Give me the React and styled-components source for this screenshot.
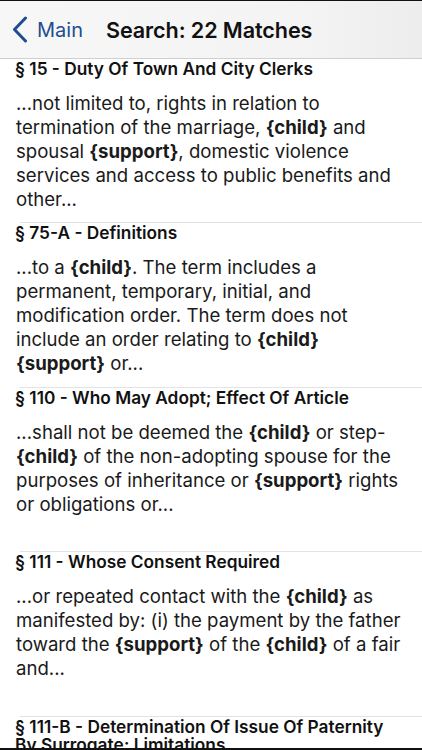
import React from "react";
import styled, { createGlobalStyle } from "styled-components";

const Global = createGlobalStyle`
  html, body { margin: 0; padding: 0; background: #fff; }
  body { font-family: Inter, "Liberation Sans", sans-serif; -webkit-font-smoothing: antialiased; }
`;

const Frame = styled.div`
  width: 422px;
  height: 750px;
  box-sizing: border-box;
  border-top: 1px solid #111;
  border-bottom: 2px solid #111;
  display: flex;
  flex-direction: column;
  overflow: hidden;
  background: #fff;
`;

const NavBar = styled.header`
  flex: 0 0 auto;
  height: 57px;
  border-bottom: 1px solid #cfcfd1;
  background: linear-gradient(to right, #f7f7f7, #f4f4f4 70%, #ededed);
  display: flex;
  align-items: center;
  padding-left: 12px;
`;

const BackButton = styled.button`
  display: flex;
  align-items: center;
  gap: 9px;
  border: 0;
  background: none;
  padding: 0;
  color: #1d4e8f;
  font-family: inherit;
  font-size: 20px;
  font-weight: 400;
  cursor: pointer;
`;

const NavTitle = styled.h1`
  margin: 0 0 0 23px;
  font-size: 21.6px;
  font-weight: 600;
  color: #111;
  letter-spacing: -0.1px;
`;

const List = styled.main`
  flex: 1 1 auto;
  overflow: hidden;
`;

const Cell = styled.section`
  box-sizing: border-box;
  height: ${(p) => p.$h}px;
  padding: ${(p) => (p.$sep ? "2px" : "1px")} 14px 0 15px;
  position: relative;
  overflow: hidden;
  &::before {
    content: "";
    display: ${(p) => (p.$sep ? "block" : "none")};
    position: absolute;
    top: 0;
    left: 20px;
    right: 0;
    height: 1px;
    background: #e3e3e5;
  }
`;

const Title = styled.h2`
  margin: 0;
  font-size: 17.3px;
  line-height: 18px;
  font-weight: 600;
  color: #111;
`;

const Body = styled.p`
  margin: 13px 0 0 1px;
  font-size: 18.6px;
  line-height: 24px;
  color: #1a1a1a;
  font-weight: 400;
  b { font-weight: 650; }
`;

const Chevron = () => (
  <svg width="16" height="27" viewBox="0 0 16 27" aria-hidden="true">
    <polyline
      points="13.5,2 2.5,13.5 13.5,25"
      fill="none"
      stroke="currentColor"
      strokeWidth="3"
      strokeLinecap="round"
      strokeLinejoin="round"
    />
  </svg>
);

const results = [
  {
    title: "§ 15 - Duty Of Town And City Clerks",
    body: (
      <>
        ...not limited to, rights in relation to termination of the marriage, <b>{"{child}"}</b> and
        spousal <b>{"{support}"}</b>, domestic violence services and access to public benefits and
        other...
      </>
    ),
    h: 163,
  },
  {
    title: "§ 75-A - Definitions",
    body: (
      <>
        ...to a <b>{"{child}"}</b>. The term includes a permanent, temporary, initial, and
        modification order. The term does not include an order relating to <b>{"{child}"}</b>{" "}
        <b>{"{support}"}</b> or...
      </>
    ),
    h: 165,
  },
  {
    title: "§ 110 - Who May Adopt; Effect Of Article",
    body: (
      <>
        ...shall not be deemed the <b>{"{child}"}</b> or step-<b>{"{child}"}</b> of the non-adopting
        spouse for the purposes of inheritance or <b>{"{support}"}</b> rights or obligations or...
      </>
    ),
    h: 164,
  },
  {
    title: "§ 111 - Whose Consent Required",
    body: (
      <>
        ...or repeated contact with the <b>{"{child}"}</b> as manifested by: (i) the payment by the
        father toward the <b>{"{support}"}</b> of the <b>{"{child}"}</b> of a fair and...
      </>
    ),
    h: 165,
  },
  {
    title: "§ 111-B - Determination Of Issue Of Paternity By Surrogate; Limitations",
    body: null,
    h: 164,
  },
];

export default function App() {
  return (
    <Frame>
      <Global />
      <NavBar>
        <BackButton>
          <Chevron />
          Main
        </BackButton>
        <NavTitle>Search: 22 Matches</NavTitle>
      </NavBar>
      <List>
        {results.map((r, i) => (
          <Cell key={i} $h={r.h} $sep={i > 0}>
            <Title>{r.title}</Title>
            {r.body && <Body>{r.body}</Body>}
          </Cell>
        ))}
      </List>
    </Frame>
  );
}
